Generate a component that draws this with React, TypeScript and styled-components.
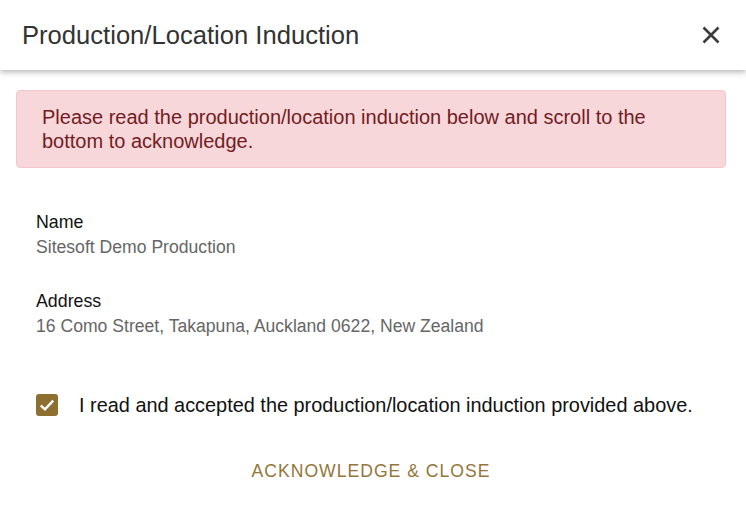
import React from "react";
import styled, { createGlobalStyle } from "styled-components";

const Global = createGlobalStyle`
  html, body { margin: 0; padding: 0; background: #fff; }
  body { font-family: "Liberation Sans", Arial, sans-serif; }
  * { box-sizing: border-box; }
`;

const Dialog = styled.div`
  width: 746px;
  height: 527px;
  background: #fff;
  display: flex;
  flex-direction: column;
  overflow: hidden;
`;

const Header = styled.header`
  height: 70px;
  flex: none;
  display: flex;
  align-items: center;
  justify-content: space-between;
  padding: 0 25px 0 22px;
  box-shadow: 0 2px 6px rgba(0, 0, 0, 0.3);
  position: relative;
  z-index: 1;
`;

const Title = styled.h1`
  margin: 0;
  font-size: 25.6px;
  font-weight: 400;
  color: #333;
`;

const CloseButton = styled.button`
  border: 0;
  background: none;
  padding: 0;
  width: 20px;
  height: 20px;
  display: flex;
  align-items: center;
  justify-content: center;
  cursor: pointer;
`;

const Body = styled.div`
  flex: 1;
  padding: 20px 20px 0 16px;
  display: flex;
  flex-direction: column;
`;

const Alert = styled.div`
  background: #f8d7da;
  border: 1px solid #f5c6cb;
  border-radius: 4px;
  color: #721c24;
  font-size: 20px;
  line-height: 24px;
  padding: 14px 25px 14px 25px;
  width: 710px;
`;

const Details = styled.div`
  padding: 44px 20px 0 20px;
  display: flex;
  flex-direction: column;
  gap: 34px;
`;

const Field = styled.div`
  display: flex;
  flex-direction: column;
  gap: 5px;
`;

const Label = styled.div`
  font-size: 17.8px;
  line-height: 20px;
  color: #111;
`;

const Value = styled.div`
  font-size: 17.6px;
  line-height: 20px;
  color: #666;
`;

const CheckRow = styled.label`
  margin: 57px 0 0 20px;
  height: 24px;
  display: flex;
  align-items: center;
  gap: 21px;
  font-size: 19.9px;
  color: #111;
`;

const Box = styled.span`
  width: 22px;
  height: 22px;
  flex: none;
  border-radius: 3px;
  background: #8d6f30;
  display: flex;
  align-items: center;
  justify-content: center;
`;

const Footer = styled.div`
  display: flex;
  justify-content: center;
  margin-top: 44px;
`;

const Action = styled.button`
  border: 0;
  background: none;
  font-family: "Liberation Sans", Arial, sans-serif;
  font-size: 17.6px;
  line-height: 20px;
  letter-spacing: 1px;
  color: #94763a;
  padding: 0;
  cursor: pointer;
`;

export default function App() {
  return (
    <>
      <Global />
      <Dialog>
        <Header>
          <Title>Production/Location Induction</Title>
          <CloseButton aria-label="Close">
            <svg width="18" height="18" viewBox="0 0 18 18">
              <path d="M1.5 1.5 L16.5 16.5 M16.5 1.5 L1.5 16.5" stroke="#3c3c3c" strokeWidth="2.6" />
            </svg>
          </CloseButton>
        </Header>
        <Body>
          <Alert>
            Please read the production/location induction below and scroll to the bottom to acknowledge.
          </Alert>
          <Details>
            <Field>
              <Label>Name</Label>
              <Value>Sitesoft Demo Production</Value>
            </Field>
            <Field>
              <Label>Address</Label>
              <Value>16 Como Street, Takapuna, Auckland 0622, New Zealand</Value>
            </Field>
          </Details>
          <CheckRow>
            <Box>
              <svg width="18" height="18" viewBox="0 0 18 18">
                <path d="M2.8 9.5 L7 13.3 L15.2 4.6" fill="none" stroke="#fff" strokeWidth="2.4" />
              </svg>
            </Box>
            I read and accepted the production/location induction provided above.
          </CheckRow>
          <Footer>
            <Action>ACKNOWLEDGE &amp; CLOSE</Action>
          </Footer>
        </Body>
      </Dialog>
    </>
  );
}
